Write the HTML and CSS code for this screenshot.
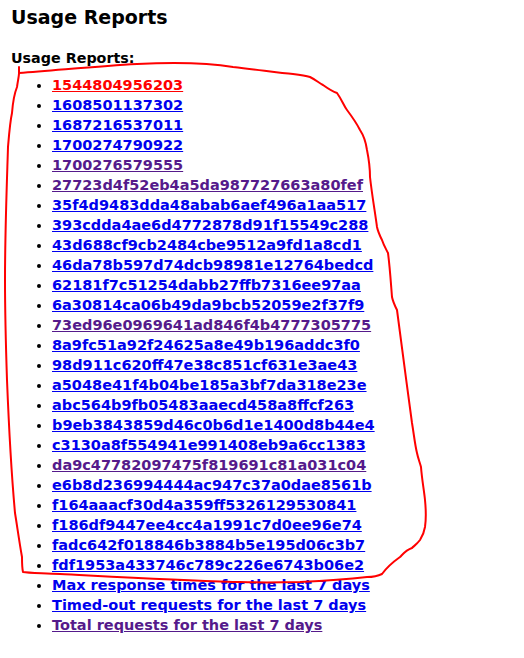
FILE: index.html
```html
<!DOCTYPE html>
<html>
<head>
<meta charset="utf-8">
<title>Usage Reports</title>
<link rel="stylesheet" href="styles.css">
</head>
<body>
<div class="page">
  <h1 class="title">Usage Reports</h1>
  <div class="subtitle">Usage Reports:</div>
  <ul class="reports">
    <li><a class="active" href="#">1544804956203</a></li>
    <li><a href="#">1608501137302</a></li>
    <li><a href="#">1687216537011</a></li>
    <li><a href="#">1700274790922</a></li>
    <li><a class="visited" href="#">1700276579555</a></li>
    <li><a class="visited" href="#">27723d4f52eb4a5da987727663a80fef</a></li>
    <li><a href="#">35f4d9483dda48abab6aef496a1aa517</a></li>
    <li><a href="#">393cdda4ae6d4772878d91f15549c288</a></li>
    <li><a href="#">43d688cf9cb2484cbe9512a9fd1a8cd1</a></li>
    <li><a href="#">46da78b597d74dcb98981e12764bedcd</a></li>
    <li><a href="#">62181f7c51254dabb27ffb7316ee97aa</a></li>
    <li><a href="#">6a30814ca06b49da9bcb52059e2f37f9</a></li>
    <li><a class="visited" href="#">73ed96e0969641ad846f4b4777305775</a></li>
    <li><a href="#">8a9fc51a92f24625a8e49b196addc3f0</a></li>
    <li><a href="#">98d911c620ff47e38c851cf631e3ae43</a></li>
    <li><a href="#">a5048e41f4b04be185a3bf7da318e23e</a></li>
    <li><a href="#">abc564b9fb05483aaecd458a8ffcf263</a></li>
    <li><a href="#">b9eb3843859d46c0b6d1e1400d8b44e4</a></li>
    <li><a href="#">c3130a8f554941e991408eb9a6cc1383</a></li>
    <li><a class="visited" href="#">da9c47782097475f819691c81a031c04</a></li>
    <li><a href="#">e6b8d236994444ac947c37a0dae8561b</a></li>
    <li><a href="#">f164aaacf30d4a359ff5326129530841</a></li>
    <li><a href="#">f186df9447ee4cc4a1991c7d0ee96e74</a></li>
    <li><a href="#">fadc642f018846b3884b5e195d06c3b7</a></li>
    <li><a href="#">fdf1953a433746c789c226e6743b06e2</a></li>
    <li><a href="#">Max response times for the last 7 days</a></li>
    <li><a href="#">Timed-out requests for the last 7 days</a></li>
    <li><a class="visited" href="#">Total requests for the last 7 days</a></li>
  </ul>
  <svg class="scribble" width="524" height="658" viewBox="0 0 524 658" aria-hidden="true">
    <path d="M19 67 L19 74 M19 73 C60 70 100 66 137 64 C180 62 215 64 233 67 C260 70 280 73 293 74 C302 75 307 76 310 77 C316 80 319 83 323 85 C330 90 334 92 337 93 C342 100 344 106 347 110 C353 118 357 124 360 130 C364 136 366 143 367 150 C369 160 370 168 370 177 C372 195 375 212 377 227 C378 232 380 236 382 240 C384 246 386 249 388 253 C390 268 391 285 392 297 C393 302 395 306 397 310 C402 350 407 385 412 423 C414 435 415 445 417 453 C418 458 420 463 421 467 C422 480 424 490 425 500 C426 510 426 520 425 527 C424 533 422 537 420 540 C417 544 414 546 412 548 C406 550 403 554 400 557 C393 562 387 567 382 574 C376 577 372 577 367 577 C340 580 320 581 300 582 C260 583 240 582 233 582 C170 580 100 576 60 574 C40 573 28 573 23 572 C22 568 22 563 22 557 C19 540 17 525 15 513 C12 480 9 430 7 380 C6 350 5 310 5 280 C5 230 7 180 8 147 C9 135 10 122 12 113 C13 100 15 92 17 87 C18 80 19 76 19 73" />
  </svg>
</div>
</body>
</html>
```

FILE: styles.css
```css
html, body {
  margin: 0;
  padding: 0;
  background: #ffffff;
}

.page {
  position: relative;
  padding: 5px 11px 0;
  font-family: "DejaVu Sans", Verdana, sans-serif;
  font-weight: bold;
  color: #000000;
  min-height: 653px;
}

.title {
  margin: 0;
  font-size: 19px;
  line-height: 24px;
  font-weight: bold;
}

.subtitle {
  margin-top: 19px;
  font-size: 14.3px;
  line-height: 20px;
}

.reports {
  margin: 7px 0 0;
  padding-left: 41px;
  font-size: 14.5px;
  line-height: 20px;
}

.reports li {
  list-style: disc;
}

.reports a {
  color: #0000ee;
  text-decoration: underline;
}

.reports a.visited {
  color: #551a8b;
}

.reports a.active {
  color: #ff0000;
}

.scribble {
  position: absolute;
  left: 0;
  top: 0;
  pointer-events: none;
}

.scribble path {
  fill: none;
  stroke: #ff0000;
  stroke-width: 2;
  stroke-linecap: round;
  stroke-linejoin: round;
}
```
